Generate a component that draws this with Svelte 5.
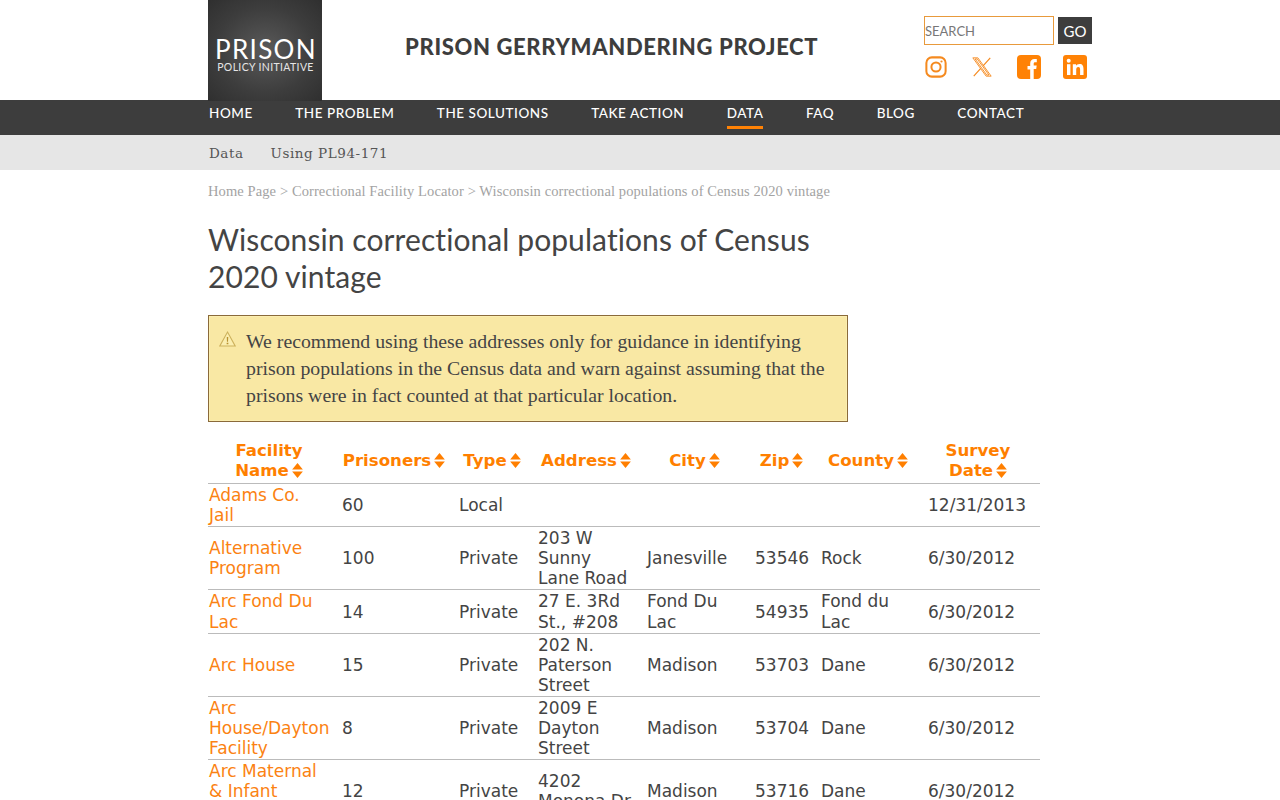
<script lang="ts">
	interface Row {
		name: string;
		prisoners: string;
		type: string;
		address: string;
		city: string;
		zip: string;
		county: string;
		date: string;
	}

	const nav = ['Home', 'The Problem', 'The Solutions', 'Take Action', 'Data', 'FAQ', 'Blog', 'Contact'];

	const columns = [
		{ label: 'Facility Name', cls: 'c-name' },
		{ label: 'Prisoners', cls: 'c-pris' },
		{ label: 'Type', cls: 'c-type' },
		{ label: 'Address', cls: 'c-addr' },
		{ label: 'City', cls: 'c-city' },
		{ label: 'Zip', cls: 'c-zip' },
		{ label: 'County', cls: 'c-county' },
		{ label: 'Survey Date', cls: 'c-date' }
	];

	const rows: Row[] = [
		{ name: 'Adams Co. Jail', prisoners: '60', type: 'Local', address: '', city: '', zip: '', county: '', date: '12/31/2013' },
		{ name: 'Alternative Program', prisoners: '100', type: 'Private', address: '203 W Sunny Lane Road', city: 'Janesville', zip: '53546', county: 'Rock', date: '6/30/2012' },
		{ name: 'Arc Fond Du Lac', prisoners: '14', type: 'Private', address: '27 E. 3Rd St., #208', city: 'Fond Du Lac', zip: '54935', county: 'Fond du Lac', date: '6/30/2012' },
		{ name: 'Arc House', prisoners: '15', type: 'Private', address: '202 N. Paterson Street', city: 'Madison', zip: '53703', county: 'Dane', date: '6/30/2012' },
		{ name: 'Arc House/Dayton Facility', prisoners: '8', type: 'Private', address: '2009 E Dayton Street', city: 'Madison', zip: '53704', county: 'Dane', date: '6/30/2012' },
		{ name: 'Arc Maternal & Infant Program', prisoners: '12', type: 'Private', address: '4202 Monona\u00a0Dr.', city: 'Madison', zip: '53716', county: 'Dane', date: '6/30/2012' }
	];
</script>

<header class="top">
	<div class="brand">
		<div class="logo">
			<span class="logo-big">PRISON</span>
			<span class="logo-small">POLICY INITIATIVE</span>
		</div>
		<div class="project">PRISON GERRYMANDERING PROJECT</div>
		<div class="tools">
			<div class="search">
				<input class="search-box" placeholder="SEARCH" />
				<button class="go">GO</button>
			</div>
			<div class="social">
				<svg viewBox="0 0 24 24" width="22" height="22" fill="none" stroke="#f58a1f" stroke-width="2.2">
					<rect x="1.5" y="1.5" width="21" height="21" rx="6" />
					<circle cx="12" cy="12" r="5" />
					<circle cx="18" cy="6" r="1.2" fill="#f58a1f" stroke="none" />
				</svg>
				<svg viewBox="0 0 24 24" width="22" height="22" fill="none" stroke="#f58a1f" stroke-width="1">
					<path d="M2 2h5.5L22 22h-5.5zM4.5 3.2 17.2 20.8h2.4L6.8 3.2z" />
					<path d="M21 2 13.2 10.8M10.6 13.6 3 22" stroke-width="1.3" />
				</svg>
				<svg viewBox="0 0 24 24" width="24" height="24">
					<rect width="24" height="24" rx="4" fill="#ff8205" />
					<path d="M13.2 24v-9.5h-2.7v-3.4h2.7V8.6c0-2.9 1.7-4.5 4.3-4.5h2.3v3.2h-1.6c-1.2 0-1.5.6-1.5 1.5v1.8h3l-.5 3.4h-2.5V24z" fill="#fff" />
				</svg>
				<svg viewBox="0 0 24 24" width="24" height="24">
					<rect width="24" height="24" rx="3" fill="#ff8205" />
					<rect x="4" y="9.2" width="3.4" height="10.8" fill="#fff" />
					<circle cx="5.7" cy="5.7" r="2" fill="#fff" />
					<path d="M9.8 9.2h3.2v1.5c.6-1 1.8-1.8 3.5-1.8 3.2 0 4 2.1 4 5V20h-3.4v-5.4c0-1.4-.3-2.7-1.8-2.7s-2.1 1.2-2.1 2.7V20H9.8z" fill="#fff" />
				</svg>
			</div>
		</div>
	</div>
</header>

<nav class="mainnav">
	<ul>
		{#each nav as item}
			<li class:active={item === 'Data'}>{item}</li>
		{/each}
	</ul>
</nav>

<nav class="subnav">
	<ul>
		<li>Data</li>
		<li>Using PL94-171</li>
	</ul>
</nav>

<main class="content">
	<div class="crumbs">
		<span>Home Page</span> &gt; <span>Correctional Facility Locator</span> &gt; Wisconsin correctional populations of Census 2020 vintage
	</div>

	<h1>Wisconsin correctional populations of Census 2020 vintage</h1>

	<div class="warning">
		<svg class="warn-icon" viewBox="0 0 16 15" width="17" height="16">
			<path d="M8 1 15.2 14H.8z" fill="#fbeeb0" stroke="#cdb15c" stroke-width="1" />
			<path d="M7.3 5.5h1.4l-.2 4.5h-1zM7.2 11h1.6v1.5H7.2z" fill="#b8912f" />
		</svg>
		<p>We recommend using these addresses only for guidance in identifying prison populations in the Census data and warn against assuming that the prisons were in fact counted at that particular location.</p>
	</div>

	<table>
		<thead>
			<tr>
				{#each columns as col}
					<th class={col.cls}>
						{col.label}<svg class="sort" viewBox="0 0 10 14" width="11" height="15"><path d="M5 0 10 6H0zM5 14 0 8h10z" fill="#ff7f00" /></svg>
					</th>
				{/each}
			</tr>
		</thead>
		<tbody>
			{#each rows as r}
				<tr>
					<td class="c-name"><span class="link">{r.name}</span></td>
					<td>{r.prisoners}</td>
					<td>{r.type}</td>
					<td>{r.address}</td>
					<td>{r.city}</td>
					<td>{r.zip}</td>
					<td>{r.county}</td>
					<td>{r.date}</td>
				</tr>
			{/each}
		</tbody>
	</table>
</main>

<style>
	:global(body) {
		margin: 0;
		background: #fff;
		height: 800px;
		overflow: hidden;
	}

	.brand {
		width: 884px;
		margin-left: 208px;
		height: 100px;
		display: flex;
		align-items: flex-start;
	}

	.logo {
		width: 114px;
		height: 101px;
		flex: none;
		background: radial-gradient(ellipse at center, #5a5a5a 0%, #3d3d3d 60%, #2f2f2f 100%);
		color: #fff;
		display: flex;
		flex-direction: column;
		align-items: center;
		font-family: 'Lato', sans-serif;
		position: relative;
		z-index: 1;
	}

	.logo-big {
		font-size: 26px;
		font-weight: 400;
		letter-spacing: 1.3px;
		line-height: 24px;
		margin: 37px 0 0 2px;
	}

	.logo-small {
		font-size: 10.5px;
		letter-spacing: 0.35px;
		line-height: 13px;
		margin-left: 1px;
		color: #e6e6e6;
	}

	.project {
		margin-left: 83px;
		margin-top: 34px;
		font-family: 'Lato', sans-serif;
		font-weight: 900;
		font-size: 22px;
		line-height: 26px;
		letter-spacing: 0.65px;
		color: #3d3d3d;
		white-space: nowrap;
		flex: 1;
	}

	.tools {
		width: 168px;
		flex: none;
		padding-top: 16px;
	}

	.search {
		display: flex;
		gap: 4px;
		align-items: center;
	}

	.search-box {
		box-sizing: border-box;
		width: 130px;
		height: 29px;
		border: 1px solid #e89a3c;
		padding: 0;
		background: #fff;
		font-family: 'Lato', sans-serif;
		font-size: 13px;
		outline: none;
	}

	.search-box::placeholder {
		color: #777;
		opacity: 1;
	}

	.go {
		width: 34px;
		height: 27px;
		border: 0;
		padding: 0;
		background: #3d3d3d;
		color: #fff;
		font-family: 'Lato', sans-serif;
		font-size: 15px;
	}

	.social {
		display: flex;
		align-items: center;
		gap: 24px;
		margin-top: 9px;
		padding-left: 1px;
		height: 25px;
	}

	.social svg:last-child {
		margin-left: -2px;
	}

	.mainnav {
		background: #3d3d3d;
		height: 35px;
	}

	.mainnav ul,
	.subnav ul {
		width: 884px;
		margin: 0 0 0 208px;
		padding: 0 0 0 1px;
		box-sizing: border-box;
		list-style: none;
		display: flex;
	}

	.mainnav ul {
		gap: 42.5px;
	}

	.mainnav li {
		font-family: 'Lato', sans-serif;
		font-size: 13.5px;
		font-weight: 500;
		letter-spacing: 0.55px;
		text-transform: uppercase;
		color: #fff;
		height: 26px;
		line-height: 26px;
	}

	.mainnav li.active {
		border-bottom: 3px solid #ff8205;
	}

	.subnav {
		background: #e6e6e6;
		height: 35px;
	}

	.subnav ul {
		gap: 27px;
	}

	.subnav li {
		font-family: 'DejaVu Serif', serif;
		font-size: 13.5px;
		line-height: 36px;
		letter-spacing: 0.55px;
		color: #555;
	}

	.content {
		width: 884px;
		margin-left: 208px;
	}

	.crumbs {
		margin-top: 12px;
		font-family: 'Liberation Serif', serif;
		font-size: 14.5px;
		line-height: 18px;
		letter-spacing: 0.1px;
		color: #a3a3a3;
	}

	h1 {
		width: 640px;
		margin: 21px 0 0;
		font-family: 'Lato', sans-serif;
		font-weight: 400;
		font-size: 30px;
		line-height: 37px;
		letter-spacing: 0.08px;
		color: #444;
	}

	.warning {
		box-sizing: border-box;
		width: 640px;
		height: 107px;
		margin-top: 20px;
		border: 1px solid #8a6a3a;
		outline: 1px solid #fbeeb0;
		outline-offset: -2px;
		background: #f9e8a4;
		display: flex;
		padding: 12px 10px 0 10px;
		gap: 10px;
	}

	.warn-icon {
		flex: none;
		margin-top: 3px;
	}

	.warning p {
		margin: 0;
		font-family: 'Liberation Serif', serif;
		font-size: 19.8px;
		line-height: 27px;
		color: #444;
	}

	table {
		width: 832px;
		margin-top: 17px;
		border-collapse: collapse;
		table-layout: fixed;
		font-family: 'DejaVu Sans', sans-serif;
		font-size: 17px;
		line-height: 20.1px;
		color: #444;
	}

	th,
	td {
		box-sizing: border-box;
		border-bottom: 1px solid #bbb;
	}

	th {
		color: #ff7f00;
		font-size: 16.6px;
		font-weight: 700;
		line-height: 20px;
		text-align: center;
		padding: 2px 12px 2px 1px;
	}

	td {
		padding: 1px 12px 1px 1px;
		vertical-align: middle;
	}

	.c-name { width: 133px; }
	.c-pris { width: 117px; }
	.c-type { width: 79px; }
	.c-addr { width: 109px; }
	.c-city { width: 108px; }
	.c-zip { width: 66px; }
	.c-county { width: 107px; }
	.c-date { width: 113px; }

	.sort {
		vertical-align: -2px;
		margin-left: 3px;
	}

	.link {
		color: #fb8212;
	}
</style>
